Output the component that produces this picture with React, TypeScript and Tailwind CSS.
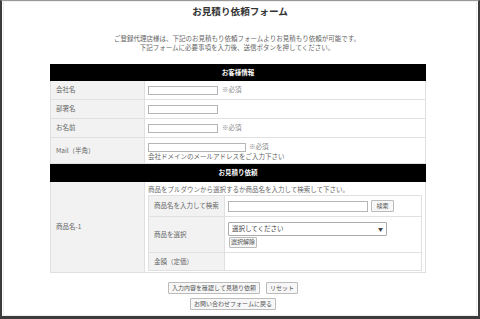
export default function App() {
  const lab = "bg-[#f2f2f2] border border-[#e0e0e0] text-left align-middle pl-[5px] text-[#666]";
  const val = "bg-white border border-[#e0e0e0] text-left align-middle pl-[3px] text-[#666]";
  const inp = "h-[9px] border border-[#b5b5b5] bg-white";
  const btn = "border border-[#bbb] bg-[#f7f7f7] rounded-[1px] text-[#555] leading-none flex items-center justify-center";
  return (
    <div className="w-[480px] h-[319px] bg-white border-t border-t-[#9a9a9a] border-l-2 border-r-2 border-b-[3px] border-l-[#3c3c3c] border-r-[#3c3c3c] border-b-[#3c3c3c] font-['Noto_Sans_CJK_JP','Noto_Sans',sans-serif] text-[6.5px] text-[#555] overflow-hidden">
      <div className="h-full border border-[#eeeeee] mx-[1px] mb-[1px] flex flex-col">
        <div className="pt-[2px] h-[16px] text-center text-[9.6px] leading-[14px] font-bold text-[#333]">お見積り依頼フォーム</div>
        <div className="mt-[16px] text-center leading-[9px] text-[#666] pr-[6px]">
          <div className="h-[9px]">ご登録代理店様は、下記のお見積もり依頼フォームよりお見積もり依頼が可能です。</div>
          <div className="h-[9px]">下記フォームに必要事項を入力後、送信ボタンを押してください。</div>
        </div>
        <table className="mt-[12px] ml-[46px] w-[376px] border-collapse table-fixed">
          <colgroup>
            <col className="w-[94px]" />
            <col />
          </colgroup>
          <tbody>
            <tr className="h-[16px]">
              <td colSpan={2} className="bg-black text-white font-bold text-center border border-black">お客様情報</td>
            </tr>
            <tr className="h-[19px]">
              <td className={lab}>会社名</td>
              <td className={val}>
                <div className="flex items-center gap-[4px]"><div className={`${inp} w-[70px]`} /><span className="text-[#888]">※必須</span></div>
              </td>
            </tr>
            <tr className="h-[19px]">
              <td className={lab}>部署名</td>
              <td className={val}>
                <div className="flex items-center"><div className={`${inp} w-[70px]`} /></div>
              </td>
            </tr>
            <tr className="h-[19px]">
              <td className={lab}>お名前</td>
              <td className={val}>
                <div className="flex items-center gap-[4px]"><div className={`${inp} w-[70px]`} /><span className="text-[#888]">※必須</span></div>
              </td>
            </tr>
            <tr className="h-[26px]">
              <td className={lab}>Mail（半角）</td>
              <td className={val}>
                <div className="flex items-center gap-[3px] pt-[1px]"><div className={`${inp} w-[98px]`} /><span className="text-[#888]">※必須</span></div>
                <div className="leading-[8px]">会社ドメインのメールアドレスをご入力下さい</div>
              </td>
            </tr>
            <tr className="h-[18px]">
              <td colSpan={2} className="bg-black text-white font-bold text-center border border-black">お見積り依頼</td>
            </tr>
            <tr className="h-[91px]">
              <td className={lab}>商品名-1</td>
              <td className="bg-white border border-[#e0e0e0] align-top pl-[3px] pr-[3px] pt-[3px] text-[#666]">
                <div className="leading-[9px]">商品をプルダウンから選択するか商品名を入力して検索して下さい。</div>
                <table className="w-full border-collapse table-fixed mt-[1px] border border-[#e0e0e0]">
                  <colgroup>
                    <col className="w-[76px]" />
                    <col />
                  </colgroup>
                  <tbody>
                    <tr className="h-[21px]">
                      <td className={lab}>商品名を入力して検索</td>
                      <td className={val}>
                        <div className="flex items-center gap-[3px]">
                          <div className="h-[11px] w-[140px] border border-[#b5b5b5]" />
                          <div className={`${btn} h-[12px] w-[23px] text-[6px]`}>検索</div>
                        </div>
                      </td>
                    </tr>
                    <tr className="h-[36px]">
                      <td className={lab}>商品を選択</td>
                      <td className={val}>
                        <div className="h-[14px] w-[159px] border border-[#aaa] rounded-[1px] flex items-center justify-between px-[3px] text-[#444]">
                          <span>選択してください</span>
                          <span className="text-[5px]">▼</span>
                        </div>
                        <div className={`${btn} h-[11px] w-[28px] ml-[1px] mt-[1px] text-[6px]`}>選択解除</div>
                      </td>
                    </tr>
                    <tr className="h-[18px]">
                      <td className={lab}>金額（定価）</td>
                      <td className={val}></td>
                    </tr>
                  </tbody>
                </table>
              </td>
            </tr>
          </tbody>
        </table>
        <div className="mt-[9px] flex justify-center gap-[6px] pr-[14px] text-[6px]">
          <div className={`${btn} h-[12px] px-[3px]`}>入力内容を確認して見積り依頼</div>
          <div className={`${btn} h-[12px] px-[3px]`}>リセット</div>
        </div>
        <div className="mt-[4px] flex justify-center pr-[14px] text-[6px]">
          <div className={`${btn} h-[12px] px-[3px]`}>お問い合わせフォームに戻る</div>
        </div>
      </div>
    </div>
  );
}
